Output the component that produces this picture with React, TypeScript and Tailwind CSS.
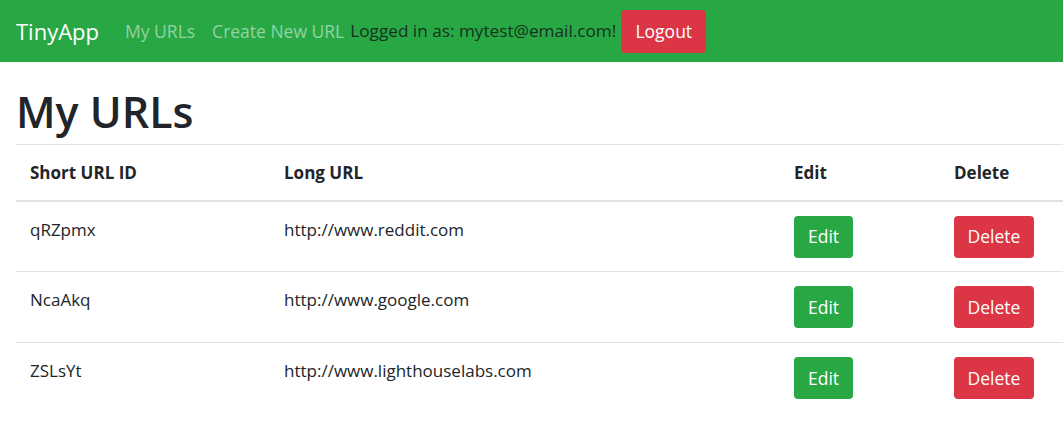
import React from 'react';

const urls = [
  { id: 'qRZpmx', long: 'http://www.reddit.com' },
  { id: 'NcaAkq', long: 'http://www.google.com' },
  { id: 'ZSLsYt', long: 'http://www.lighthouselabs.com' },
];

export default function App() {
  return (
    <div className="min-h-screen bg-white text-[#212529] font-['Open_Sans',sans-serif]">
      <nav className="h-[62px] bg-[#28a745] flex items-center px-4">
        <a className="text-white text-[22px] mr-[26px]">TinyApp</a>
        <a className="text-[#93d3a2] text-[17.5px] mr-[17px]">My URLs</a>
        <a className="text-[#93d3a2] text-[17.5px] mr-[6px]">Create New URL</a>
        <span className="text-[#16321d] text-[17.2px] mr-[5px]">Logged in as: mytest@email.com!</span>
        <button className="h-[43px] w-[85px] rounded bg-[#dc3545] text-white text-[17.5px]">Logout</button>
      </nav>

      <main className="px-4">
        <h1 className="text-[43px] font-semibold leading-none pt-[28px] pb-[11px]">My URLs</h1>
        <table className="w-[1080px] border-collapse text-[17px] text-left">
          <thead>
            <tr className="h-[56px] border-t border-[#dee2e6] border-b-2 border-b-[#dee2e6]">
              <th className="w-[256px] pl-[14px] font-bold">Short URL ID</th>
              <th className="w-[510px] pl-[12px] font-bold">Long URL</th>
              <th className="w-[160px] pl-[12px] font-bold">Edit</th>
              <th className="pl-[12px] font-bold">Delete</th>
            </tr>
          </thead>
          <tbody>
            {urls.map((u) => (
              <tr key={u.id} className="h-[71px] border-b border-[#dee2e6] last:border-b-0">
                <td className="pl-[14px] align-top pt-[15px]">{u.id}</td>
                <td className="pl-[12px] align-top pt-[15px]">{u.long}</td>
                <td className="pl-[12px] align-top pt-[14px]">
                  <button className="h-[42px] w-[59px] rounded bg-[#28a745] text-white text-[17.5px]">Edit</button>
                </td>
                <td className="pl-[12px] align-top pt-[14px]">
                  <button className="h-[42px] w-[80px] rounded bg-[#dc3545] text-white text-[17.5px]">Delete</button>
                </td>
              </tr>
            ))}
          </tbody>
        </table>
      </main>
    </div>
  );
}
